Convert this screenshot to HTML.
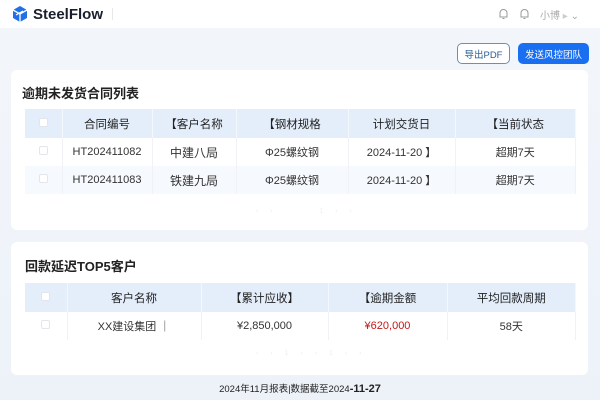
<!DOCTYPE html>
<html><head><meta charset="utf-8"><style>
*{box-sizing:border-box;margin:0;padding:0}
body{width:600px;height:400px;overflow:hidden;background:linear-gradient(180deg,#f3f6fb,#edf2f9);font-family:"Liberation Sans","Noto Sans CJK SC",sans-serif;color:#222;position:relative}
.hdr{position:absolute;left:0;top:0;width:600px;height:28px;background:#fff}
.logo{position:absolute;left:11px;top:5px;display:flex;align-items:center;font-weight:bold;font-size:15px;color:#1a1f2e}
.card{position:absolute;left:11px;width:577px;background:#fff;border-radius:6px}
.t{position:absolute;font-size:13px;font-weight:bold}
table{position:absolute;left:14px;border-collapse:collapse;font-size:11px;color:#333}
th{background:#e4eefb;height:29px;font-weight:normal;font-size:11.5px;color:#222;border-right:1px solid #f4f8fd}
td{height:28px;text-align:center;border-right:1px solid #f0f2f5}
tr.alt td{background:#f6f9fd}
th,td{text-align:center}
.cb{display:inline-block;width:9px;height:9px;border:1px solid #e2e6ec;border-radius:2px;background:#fff}
.btn{position:absolute;top:43px;height:21px;font-size:9.5px;border-radius:5px;display:flex;align-items:center;justify-content:center}
.pg{position:absolute;font-size:7px;color:#eceef2;letter-spacing:5px}
</style></head><body>
<div class="hdr">
<div class="logo"><svg width="18" height="18" viewBox="0 0 18 18"><path d="M9 1L16 5V13L9 17L2 13V5Z" fill="#2170e8"/><path d="M2 5L9 9L16 5M9 9V17" stroke="#fff" stroke-width="1.3" fill="none"/><path d="M5 10L12 6" stroke="#fff" stroke-width="1.2"/></svg><span style="margin-left:4px">SteelFlow</span></div>
<div style="position:absolute;left:112px;top:8px;width:1px;height:12px;background:#e6e8ec"></div>
<svg style="position:absolute;left:498px;top:8px" width="11" height="12" viewBox="0 0 11 12"><path d="M2 9V5a3.5 3.5 0 0 1 7 0v4H1.5h8M4.5 10.5h2" stroke="#999" fill="none"/></svg>
<svg style="position:absolute;left:519px;top:8px" width="11" height="12" viewBox="0 0 11 12"><path d="M2 9V5a3.5 3.5 0 0 1 7 0v4H1.5h8M4.5 10.5h2" stroke="#999" fill="none"/></svg>
<div style="position:absolute;left:540px;top:7px;font-size:10px;color:#aaa">小博 <span style="color:#ccc">▸</span> ⌄</div>
</div>
<div class="btn" style="left:457px;width:53px;border:1px solid #6b8fb8;background:#fff;color:#2a5a90">导出PDF</div>
<div class="btn" style="left:518px;width:71px;background:#1a6ef0;color:#fff">发送风控团队</div>

<div class="card" style="top:70px;height:160px">
<div class="t" style="left:11px;top:13px">逾期未发货合同列表</div>
<table style="top:39px;width:551px">
<tr><th style="width:37px"><span class="cb"></span></th><th style="width:90px">合同编号</th><th style="width:84px">【客户名称</th><th style="width:112px">【钢材规格</th><th style="width:107px">计划交货日</th><th>【当前状态</th></tr>
<tr><td><span class="cb"></span></td><td>HT202411082</td><td style="font-size:12px">中建八局</td><td>Φ25螺纹钢</td><td>2024-11-20 】</td><td>超期7天</td></tr>
<tr class="alt"><td><span class="cb"></span></td><td>HT202411083</td><td style="font-size:12px">铁建九局</td><td>Φ25螺纹钢</td><td>2024-11-20 】</td><td>超期7天</td></tr>
</table>
<div class="pg" style="left:245px;top:138px">‹ › &nbsp;&nbsp;&nbsp;&nbsp; 1 ‹ ›</div>
</div>

<div class="card" style="top:242px;height:133px">
<div class="t" style="left:14px;top:14px">回款延迟TOP5客户</div>
<table style="top:41px;width:551px">
<tr><th style="width:42px"><span class="cb"></span></th><th style="width:134px">客户名称</th><th style="width:127px">【累计应收】</th><th style="width:119px">【逾期金额</th><th>平均回款周期</th></tr>
<tr><td><span class="cb"></span></td><td>XX建设集团 ｜</td><td>¥2,850,000</td><td style="color:#c01818">¥620,000</td><td>58天</td></tr>
</table>
<div class="pg" style="left:245px;top:108px">‹ › 1 ‹ › 1 ‹ ›</div>
</div>
<div style="position:absolute;top:381px;width:600px;text-align:center;font-size:9.5px;color:#222">2024年11月报表|数据截至2024<span style="font-size:11px;font-weight:bold">-11-27</span></div>
</body></html>
